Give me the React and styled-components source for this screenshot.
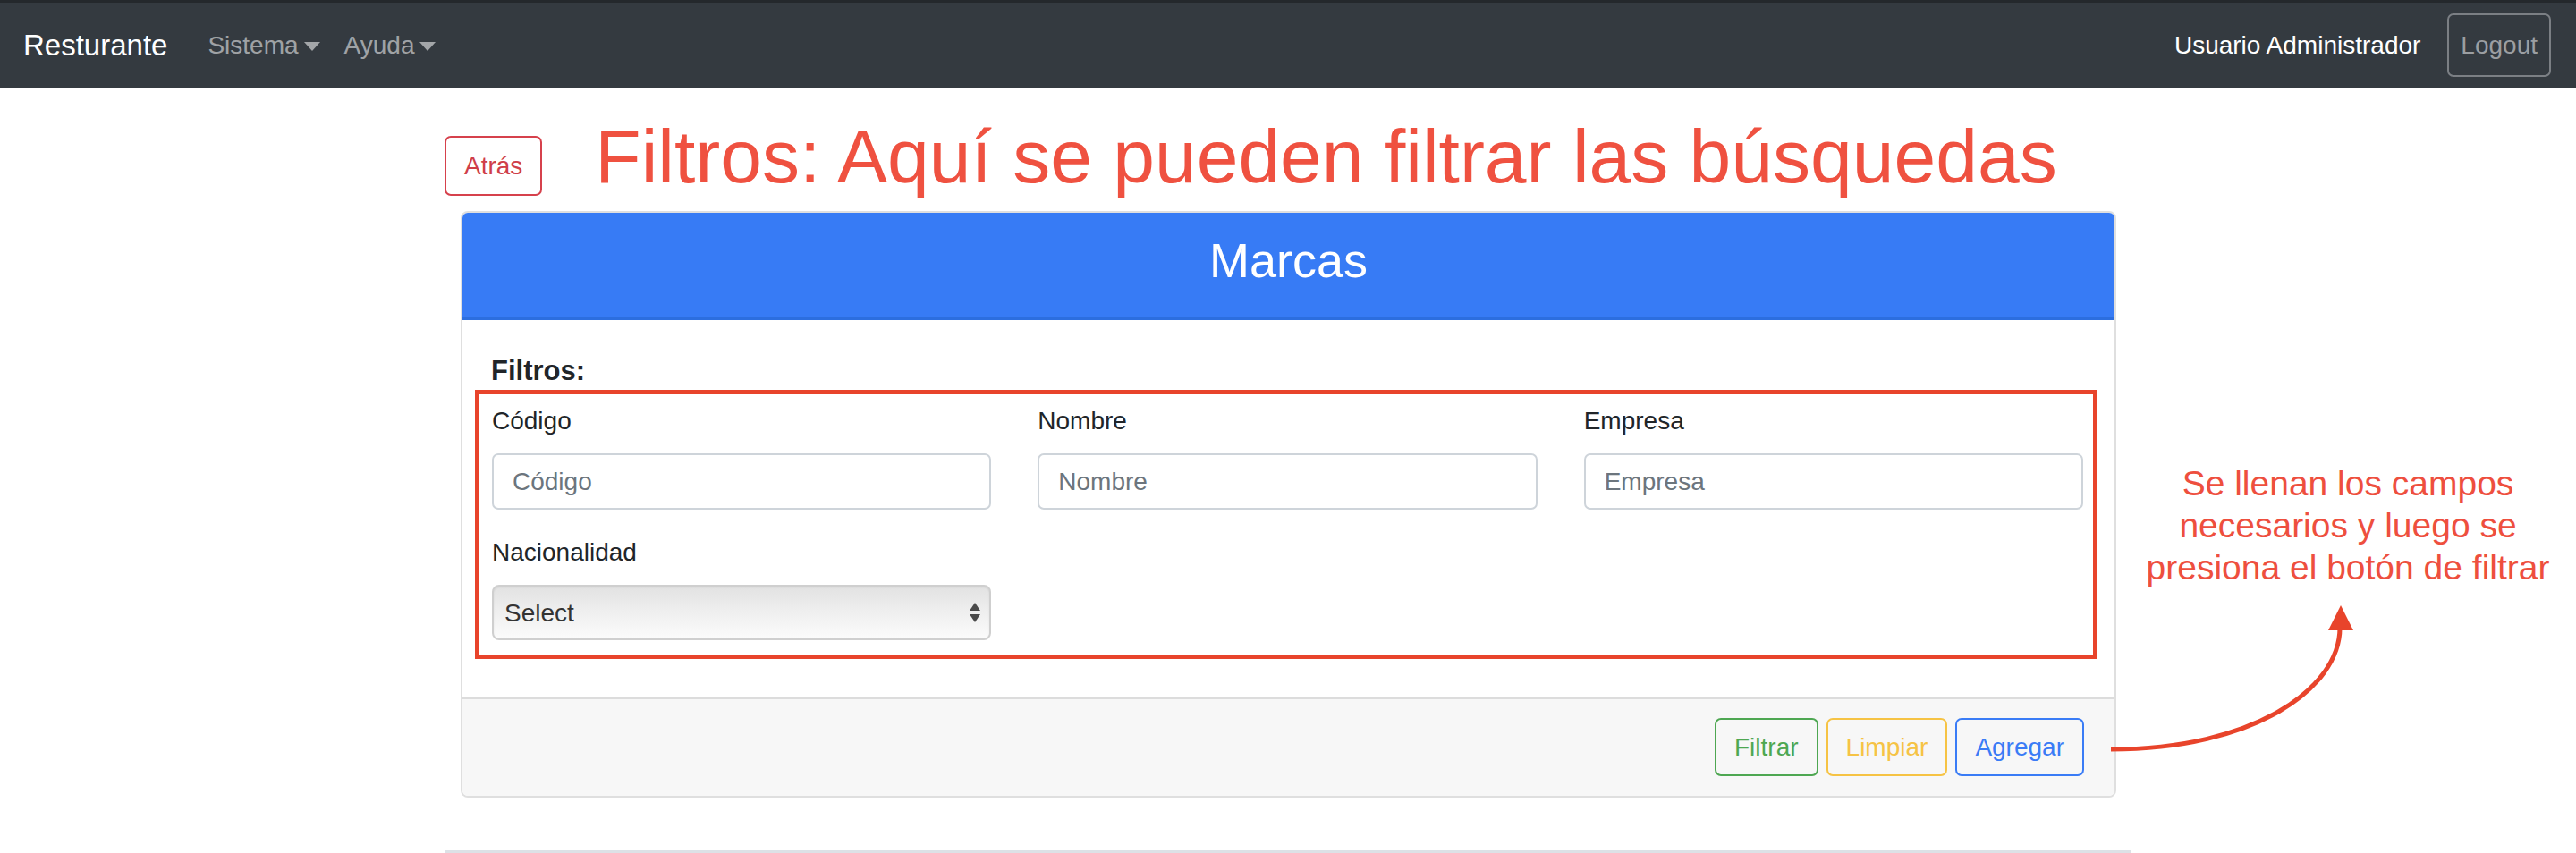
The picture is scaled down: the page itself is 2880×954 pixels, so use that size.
import styled, { createGlobalStyle } from "styled-components";

const GlobalStyle = createGlobalStyle`
  html, body {
    margin: 0;
    padding: 0;
    overflow: hidden;
    background: #ffffff;
    font-family: "Liberation Sans", Arial, sans-serif;
  }
  * {
    box-sizing: border-box;
  }
`;

const Page = styled.div`
  position: relative;
  width: 2880px;
  height: 954px;
`;

const Navbar = styled.nav`
  display: flex;
  align-items: center;
  height: 98px;
  padding: 0 28px 0 26px;
  background: #343a40;
  border-top: 3px solid #24282c;
`;

const Brand = styled.a`
  color: #ffffff;
  font-size: 33px;
  margin-right: 45px;
  text-decoration: none;
`;

const NavLinks = styled.div`
  display: flex;
  align-items: center;
  gap: 27px;
  flex: 1;
`;

const NavLink = styled.span`
  display: flex;
  align-items: center;
  color: rgba(255, 255, 255, 0.55);
  font-size: 28px;
`;

const Caret = styled.span`
  width: 0;
  height: 0;
  margin-left: 6px;
  margin-top: 2px;
  border-top: 10px solid rgba(255, 255, 255, 0.55);
  border-left: 9px solid transparent;
  border-right: 9px solid transparent;
`;

const UserName = styled.span`
  color: #ffffff;
  font-size: 28px;
  margin-right: 30px;
`;

const LogoutButton = styled.button`
  height: 71px;
  padding: 0 13px;
  background: transparent;
  border: 2px solid #7b7f84;
  border-radius: 7px;
  color: #9b9ea2;
  font-family: inherit;
  font-size: 28px;
`;

const Container = styled.main`
  width: 1886px;
  margin: 0 auto;
`;

const HeaderRow = styled.div`
  display: flex;
  align-items: flex-start;
  padding-top: 35px;
`;

const BackButton = styled.button`
  margin-top: 19px;
  height: 67px;
  padding: 0 20px;
  background: #ffffff;
  border: 2px solid #d6414c;
  border-radius: 7px;
  color: #cf3e49;
  font-family: inherit;
  font-size: 28px;
`;

const Heading = styled.h1`
  margin: 0 0 0 59px;
  color: #ef5140;
  font-size: 84px;
  font-weight: 400;
  line-height: 84px;
  white-space: nowrap;
`;

const Card = styled.section`
  margin: 17px 17px 0 18px;
  border: 2px solid #dfdfdf;
  border-radius: 8px;
  overflow: hidden;
`;

const CardHeader = styled.h2`
  margin: 0;
  padding: 13px 0 23px;
  background: #377bf5;
  border-bottom: 3px solid #2c6edf;
  color: #ffffff;
  font-size: 54px;
  font-weight: 400;
  line-height: 81px;
  text-align: center;
`;

const CardBody = styled.div`
  padding: 38px 19px 43px 14px;
`;

const FilterTitle = styled.h5`
  margin: 0 0 3px 18px;
  color: #212529;
  font-size: 31px;
  font-weight: 700;
  line-height: 37px;
`;

const Highlight = styled.div`
  border: 5px solid #e8442b;
  padding: 9px 11px 16px 14px;
`;

const FieldGrid = styled.div`
  display: grid;
  grid-template-columns: repeat(3, 1fr);
  column-gap: 52px;
  row-gap: 27px;
`;

const Field = styled.div`
  display: flex;
  flex-direction: column;
`;

const Label = styled.label`
  margin-bottom: 15px;
  color: #212529;
  font-size: 28px;
  line-height: 42px;
`;

const Input = styled.input`
  height: 63px;
  padding: 0 21px;
  border: 2px solid #ced4da;
  border-radius: 7px;
  color: #495057;
  font-family: inherit;
  font-size: 28px;
  outline: none;
  &::placeholder {
    color: #6c757d;
  }
`;

const SelectWrap = styled.div`
  position: relative;
`;

const Select = styled.select`
  width: 100%;
  height: 62px;
  padding: 0 12px;
  appearance: none;
  background: linear-gradient(#e2e2e2, #eeeeee 45%, #fbfbfb);
  border: 2px solid #cfcfcf;
  border-radius: 8px;
  box-shadow: inset 0 1px 2px rgba(0, 0, 0, 0.08);
  color: #333333;
  font-family: inherit;
  font-size: 28px;
`;

const SelectArrows = styled.svg`
  position: absolute;
  right: 12px;
  top: 20px;
  pointer-events: none;
`;

const CardFooter = styled.div`
  display: flex;
  justify-content: flex-end;
  gap: 9px;
  padding: 21px 34px 22px 0;
  background: #f7f7f7;
  border-top: 2px solid #dcdcdc;
`;

const OutlineButton = styled.button`
  height: 65px;
  padding: 0 20px;
  background: transparent;
  border: 2px solid ${(p) => p.$tone};
  border-radius: 7px;
  color: ${(p) => p.$tone};
  font-family: inherit;
  font-size: 28px;
`;

const ResultsTable = styled.div`
  margin-top: 59px;
  height: 60px;
  background: #f5f6f8;
  border-top: 3px solid #dde1e6;
  border-left: 2px solid #dde1e6;
  border-right: 2px solid #dde1e6;
`;

const Note = styled.p`
  position: absolute;
  top: 517px;
  left: 2365px;
  width: 520px;
  margin: 0;
  color: #ee4f3e;
  font-size: 39px;
  line-height: 47px;
  text-align: center;
`;

const ArrowLayer = styled.svg`
  position: absolute;
  top: 0;
  left: 0;
  pointer-events: none;
`;

const fields = ["Código", "Nombre", "Empresa"];

export default function App() {
  return (
    <Page>
      <GlobalStyle />
      <Navbar>
        <Brand>Resturante</Brand>
        <NavLinks>
          <NavLink>
            Sistema
            <Caret />
          </NavLink>
          <NavLink>
            Ayuda
            <Caret />
          </NavLink>
        </NavLinks>
        <UserName>Usuario Administrador</UserName>
        <LogoutButton>Logout</LogoutButton>
      </Navbar>

      <Container>
        <HeaderRow>
          <BackButton>Atrás</BackButton>
          <Heading>Filtros: Aquí se pueden filtrar las búsquedas</Heading>
        </HeaderRow>

        <Card>
          <CardHeader>Marcas</CardHeader>
          <CardBody>
            <FilterTitle>Filtros:</FilterTitle>
            <Highlight>
              <FieldGrid>
                {fields.map((name) => (
                  <Field key={name}>
                    <Label>{name}</Label>
                    <Input placeholder={name} />
                  </Field>
                ))}
                <Field>
                  <Label>Nacionalidad</Label>
                  <SelectWrap>
                    <Select defaultValue="">
                      <option value="">Select</option>
                    </Select>
                    <SelectArrows width="12" height="22" viewBox="0 0 12 22">
                      <path d="M6 0 L12 9 L0 9 Z" fill="#4a4a4a" />
                      <path d="M0 13 L12 13 L6 22 Z" fill="#4a4a4a" />
                    </SelectArrows>
                  </SelectWrap>
                </Field>
              </FieldGrid>
            </Highlight>
          </CardBody>
          <CardFooter>
            <OutlineButton $tone="#4ea752">Filtrar</OutlineButton>
            <OutlineButton $tone="#f6c344">Limpiar</OutlineButton>
            <OutlineButton $tone="#3a7cf6">Agregar</OutlineButton>
          </CardFooter>
        </Card>

        <ResultsTable />
      </Container>

      <Note>
        Se llenan los campos
        <br />
        necesarios y luego se
        <br />
        presiona el botón de filtrar
      </Note>

      <ArrowLayer width="2880" height="954" viewBox="0 0 2880 954">
        <path
          d="M2360 838 C2520 838 2616 770 2616 702"
          fill="none"
          stroke="#e8442b"
          strokeWidth="5"
        />
        <path d="M2617 677 L2603 705 L2631 705 Z" fill="#e8442b" />
      </ArrowLayer>
    </Page>
  );
}
